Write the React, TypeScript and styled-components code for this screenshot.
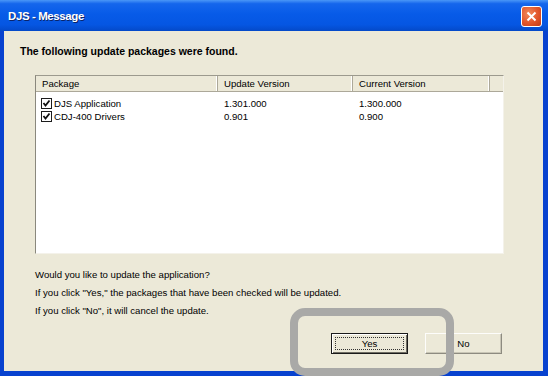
import React from 'react';
import styled, { createGlobalStyle } from 'styled-components';

const GlobalStyle = createGlobalStyle`
  html, body {
    margin: 0;
    padding: 0;
    background: #ffffff;
  }
  body {
    font-family: 'Liberation Sans', Arial, sans-serif;
    font-size: 9.6px;
    color: #000;
  }
`;

const Window = styled.div`
  position: relative;
  width: 548px;
  height: 376px;
  display: flex;
  flex-direction: column;
  background: #0842cf;
  overflow: hidden;
`;

const TitleBar = styled.div`
  height: 31px;
  flex: none;
  display: flex;
  align-items: center;
  justify-content: space-between;
  padding: 0 6px 0 8px;
  background: linear-gradient(
    to bottom,
    #4a97f7 0%,
    #1566ec 12%,
    #075be8 45%,
    #0556e2 80%,
    #0449c8 100%
  );
`;

const Title = styled.span`
  color: #fff;
  font-family: 'Liberation Sans', Arial, sans-serif;
  font-weight: bold;
  font-size: 11.5px;
  letter-spacing: -0.4px;
  text-shadow: 1px 1px 0 #0a246a;
`;

const CloseButton = styled.div`
  width: 19px;
  height: 19px;
  border: 1px solid #fff;
  border-radius: 3px;
  background: radial-gradient(circle at 35% 35%, #f08a5c 0%, #e2552a 55%, #c13a15 100%);
  display: flex;
  align-items: center;
  justify-content: center;
  margin-top: 2px;
`;

const Body = styled.div`
  flex: 1;
  margin: 0 5px 5px 4px;
  background: #ece9d8;
  display: flex;
  flex-direction: column;
  padding: 13px 0 0 0;
`;

const Heading = styled.div`
  font-weight: bold;
  font-size: 10.5px;
  padding-left: 16px;
  height: 14px;
  line-height: 14px;
`;

const ListBox = styled.div`
  margin: 17px 39px 0 31px;
  height: 177px;
  background: #fff;
  border-top: 1px solid #9c9a8e;
  border-left: 1px solid #8a887d;
  border-right: 1px solid #f4f2ea;
  border-bottom: 1px solid #f4f2ea;
  display: flex;
  flex-direction: column;
`;

const HeaderRow = styled.div`
  display: grid;
  grid-template-columns: 182px 135px 137px 1fr;
  height: 15px;
  background: #ece9d8;
  border-bottom: 1px solid #aca899;
`;

const HeaderCell = styled.div`
  padding-left: 6px;
  line-height: 15px;
  border-right: 1px solid #aca899;
  box-shadow: inset -1px 0 0 #fff;
`;

const Rows = styled.div`
  padding-top: 5px;
  display: flex;
  flex-direction: column;
`;

const Row = styled.div`
  display: grid;
  grid-template-columns: 182px 135px 137px;
  height: 13px;
  line-height: 13px;
`;

const Cell = styled.div<{ $first?: boolean }>`
  padding-left: ${(p) => (p.$first ? '5px' : '6px')};
  display: flex;
  align-items: center;
  gap: 2px;
  white-space: nowrap;
`;

const CheckBox = styled.span`
  width: 9px;
  height: 9px;
  border: 1px solid #1c1c1c;
  background: #fff;
  display: inline-flex;
  align-items: center;
  justify-content: center;
`;

const Message = styled.div`
  margin: 12px 0 0 31px;
  display: flex;
  flex-direction: column;
`;

const MessageLine = styled.div`
  height: 18px;
  line-height: 18px;
`;

const ButtonRow = styled.div`
  display: flex;
  justify-content: flex-end;
  gap: 17px;
  padding-right: 41px;
  margin-top: 13px;
`;

const Button = styled.div<{ $default?: boolean }>`
  width: 77px;
  height: 21px;
  box-sizing: border-box;
  background: #ece9d8;
  display: flex;
  align-items: center;
  justify-content: center;
  position: relative;
  border: 1px solid;
  border-color: ${(p) => (p.$default ? '#1a1a1a' : '#fdfdfb #8d8b80 #8d8b80 #fdfdfb')};
  box-shadow: ${(p) =>
    p.$default
      ? 'inset 1px 1px 0 #fff, inset -1px -1px 0 #6f6d63'
      : 'inset -1px -1px 0 #c9c6b6'};
`;

const FocusRect = styled.div`
  position: absolute;
  inset: 3px;
  border: 1px dotted #333;
`;

const Highlight = styled.div`
  position: absolute;
  left: 290px;
  top: 308px;
  width: 164px;
  height: 68px;
  box-sizing: border-box;
  border: 8px solid #a9a9a7;
  border-radius: 15px;
  pointer-events: none;
`;

const Check = () => (
  <svg width="9" height="9" viewBox="0 0 9 9">
    <path d="M1.5 4 L3.5 6.5 L7.5 1.5" stroke="#111" strokeWidth="1.8" fill="none" />
  </svg>
);

const packages = [
  { name: 'DJS Application', update: '1.301.000', current: '1.300.000' },
  { name: 'CDJ-400 Drivers', update: '0.901', current: '0.900' },
];

export default function App() {
  return (
    <>
      <GlobalStyle />
      <Window>
        <TitleBar>
          <Title>DJS - Message</Title>
          <CloseButton>
            <svg width="11" height="11" viewBox="0 0 11 11">
              <path d="M1.5 1.5 L9.5 9.5 M9.5 1.5 L1.5 9.5" stroke="#fff" strokeWidth="2" />
            </svg>
          </CloseButton>
        </TitleBar>
        <Body>
          <Heading>The following update packages were found.</Heading>
          <ListBox>
            <HeaderRow>
              <HeaderCell>Package</HeaderCell>
              <HeaderCell>Update Version</HeaderCell>
              <HeaderCell>Current Version</HeaderCell>
              <div />
            </HeaderRow>
            <Rows>
              {packages.map((pkg) => (
                <Row key={pkg.name}>
                  <Cell $first>
                    <CheckBox>
                      <Check />
                    </CheckBox>
                    {pkg.name}
                  </Cell>
                  <Cell>{pkg.update}</Cell>
                  <Cell>{pkg.current}</Cell>
                </Row>
              ))}
            </Rows>
          </ListBox>
          <Message>
            <MessageLine>Would you like to update the application?</MessageLine>
            <MessageLine>
              If you click "Yes," the packages that have been checked will be updated.
            </MessageLine>
            <MessageLine>If you click "No", it will cancel the update.</MessageLine>
          </Message>
          <ButtonRow>
            <Button $default>
              <FocusRect />
              Yes
            </Button>
            <Button>No</Button>
          </ButtonRow>
        </Body>
        <Highlight />
      </Window>
    </>
  );
}
